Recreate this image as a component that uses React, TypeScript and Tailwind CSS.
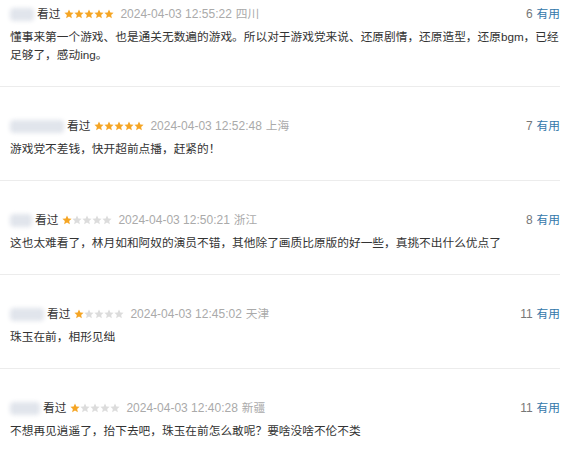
import React from 'react';

type Review = {
  nameWidth: number;
  stars: number;
  time: string;
  place: string;
  votes: number;
  text: string;
};

const reviews: Review[] = [
  {
    nameWidth: 24,
    stars: 5,
    time: '2024-04-03 12:55:22',
    place: '四川',
    votes: 6,
    text: '懂事来第一个游戏、也是通关无数遍的游戏。所以对于游戏党来说、还原剧情，还原造型，还原bgm，已经足够了，感动ing。',
  },
  {
    nameWidth: 54,
    stars: 5,
    time: '2024-04-03 12:52:48',
    place: '上海',
    votes: 7,
    text: '游戏党不差钱，快开超前点播，赶紧的！',
  },
  {
    nameWidth: 22,
    stars: 1,
    time: '2024-04-03 12:50:21',
    place: '浙江',
    votes: 8,
    text: '这也太难看了，林月如和阿奴的演员不错，其他除了画质比原版的好一些，真挑不出什么优点了',
  },
  {
    nameWidth: 34,
    stars: 1,
    time: '2024-04-03 12:45:02',
    place: '天津',
    votes: 11,
    text: '珠玉在前，相形见绌',
  },
  {
    nameWidth: 30,
    stars: 1,
    time: '2024-04-03 12:40:28',
    place: '新疆',
    votes: 11,
    text: '不想再见逍遥了，抬下去吧，珠玉在前怎么敢呢？要啥没啥不伦不类',
  },
];

function Star({ on }: { on: boolean }) {
  return (
    <svg width="10" height="10" viewBox="0 0 10 10">
      <polygon
        points="5,0.4 6.35,3.4 9.6,3.7 7.15,5.9 7.85,9.2 5,7.5 2.15,9.2 2.85,5.9 0.4,3.7 3.65,3.4"
        fill={on ? '#f5a524' : '#dcdcdc'}
      />
    </svg>
  );
}

function Item({ r, first }: { r: Review; first: boolean }) {
  return (
    <div className={`border-b border-[#ececec] pb-[22px] pl-[10px] ${first ? 'pt-[4px]' : 'pt-[29px]'}`}>
      <div className="flex h-5 items-center text-[12px]">
        <span
          className="mr-[3px] h-[13px] rounded-sm bg-[#e1e5ec] blur-[2px]"
          style={{ width: r.nameWidth }}
        />
        <span className="text-[11.7px] text-[#333]">看过</span>
        <span className="ml-[4px] flex">
          {[0, 1, 2, 3, 4].map((i) => (
            <Star key={i} on={i < r.stars} />
          ))}
        </span>
        <span className="ml-[6px] text-[#aaa]">{r.time}</span>
        <span className="ml-[4px] text-[11.7px] text-[#aaa]">{r.place}</span>
        <span className="ml-auto text-[#777]">{r.votes}</span>
        <span className="ml-[4px] text-[11.7px] text-[#3377aa]">有用</span>
      </div>
      <p className="mt-[4px] text-[11.7px] leading-[18px] text-[#333]">{r.text}</p>
    </div>
  );
}

export default function App() {
  return (
    <div
      className="h-[455px] w-[584px] overflow-hidden bg-white"
      style={{ fontFamily: '"Liberation Sans", "Noto Sans CJK SC", sans-serif' }}
    >
      <div className="w-[560px]">
        {reviews.map((r, i) => (
          <Item key={i} r={r} first={i === 0} />
        ))}
      </div>
    </div>
  );
}
